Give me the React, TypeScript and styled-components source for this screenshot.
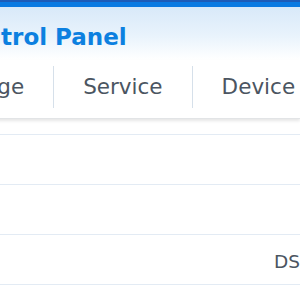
import React from "react";
import styled, { createGlobalStyle } from "styled-components";

const Global = createGlobalStyle`
  html, body { margin: 0; padding: 0; background: #ffffff; overflow: hidden; }
  body { width: 300px; height: 300px; }
`;

const Window = styled.div`
  width: 300px;
  height: 300px;
  overflow: hidden;
  display: flex;
  flex-direction: column;
  font-family: "DejaVu Sans", Verdana, sans-serif;
  background: #fff;
`;

const TopBar = styled.div`
  height: 5px;
  flex: none;
  background: #0a7ae2;
  border-top: 2px solid #1d5cb8;
`;

const Header = styled.div`
  height: 53px;
  flex: none;
  background: linear-gradient(180deg, #d8e9f9 0%, #e9f3fc 55%, #ffffff 100%);
  display: flex;
  align-items: flex-start;
  padding-top: 16px;
  box-sizing: border-box;
`;

const Title = styled.h1`
  margin: 0 0 0 -48px;
  font-size: 23px;
  line-height: 28px;
  font-weight: bold;
  color: #0c80e0;
  white-space: nowrap;
`;

const Tabs = styled.div`
  height: 59px;
  flex: none;
  display: flex;
  align-items: flex-start;
  padding-top: 6px;
  box-sizing: border-box;
  margin-left: -89px;
  position: relative;
  z-index: 1;
  box-shadow: 0 2px 3px rgba(0, 0, 0, 0.1);
  border-bottom: 1px solid #e2e4e6;
  white-space: nowrap;
`;

const Tab = styled.div<{ $first?: boolean }>`
  padding: 0 29px;
  font-size: 21.5px;
  color: #4b5561;
  height: 42px;
  line-height: 42px;
  border-left: ${(p) => (p.$first ? "none" : "1px solid #d6e0ea")};
`;

const List = styled.div`
  display: flex;
  flex-direction: column;
  margin-top: 2px;
`;

const Row = styled.div<{ $h: number }>`
  height: ${(p) => p.$h}px;
  flex: none;
  box-sizing: border-box;
  border-bottom: 1px solid #e3ebf4;
  display: grid;
  grid-template-columns: 274px 1fr;
  align-items: center;
  white-space: nowrap;
`;

const Value = styled.div`
  grid-column: 2;
  font-size: 18.5px;
  color: #4b5561;
  padding-top: 4px;
`;

export default function App() {
  return (
    <>
      <Global />
      <Window>
        <TopBar />
        <Header>
          <Title>Control Panel</Title>
        </Header>
        <Tabs>
          <Tab $first>Storage</Tab>
          <Tab>Service</Tab>
          <Tab>Device</Tab>
        </Tabs>
        <List>
          <Row $h={14} />
          <Row $h={50} />
          <Row $h={50} />
          <Row $h={50}>
            <Value>DS</Value>
          </Row>
          <Row $h={50} />
        </List>
      </Window>
    </>
  );
}
